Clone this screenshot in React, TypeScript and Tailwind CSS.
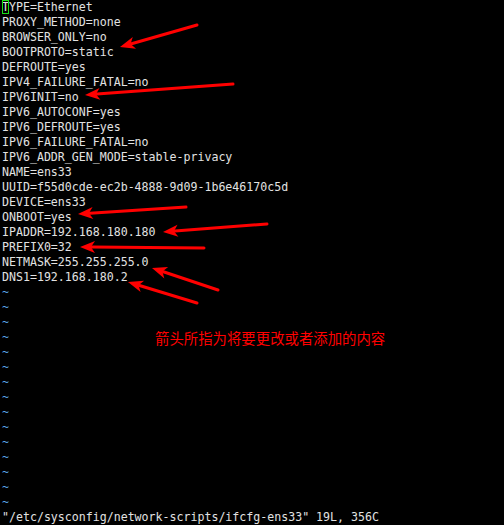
import React from 'react';

const lines = [
    'TYPE=Ethernet',
    'PROXY_METHOD=none',
    'BROWSER_ONLY=no',
    'BOOTPROTO=static',
    'DEFROUTE=yes',
    'IPV4_FAILURE_FATAL=no',
    'IPV6INIT=no',
    'IPV6_AUTOCONF=yes',
    'IPV6_DEFROUTE=yes',
    'IPV6_FAILURE_FATAL=no',
    'IPV6_ADDR_GEN_MODE=stable-privacy',
    'NAME=ens33',
    'UUID=f55d0cde-ec2b-4888-9d09-1b6e46170c5d',
    'DEVICE=ens33',
    'ONBOOT=yes',
    'IPADDR=192.168.180.180',
    'PREFIX0=32',
    'NETMASK=255.255.255.0',
    'DNS1=192.168.180.2',
];

// 화살표: [꼬리 x, 꼬리 y, 끝 x, 끝 y]
const arrows: [number, number, number, number][] = [
    [197, 25, 120, 47],
    [233, 84, 85, 95],
    [186, 207, 78, 214],
    [267, 224, 163, 232],
    [204, 248, 80, 247],
    [218, 290, 152, 268],
    [197, 303, 128, 282],
];

const Arrow: React.FC<{ a: [number, number, number, number] }> = ({ a }) => {
    const [x1, y1, x2, y2] = a;
    const dx = x2 - x1;
    const dy = y2 - y1;
    const len = Math.sqrt(dx * dx + dy * dy);
    const ux = dx / len;
    const uy = dy / len;
    const headLen = 15;
    const headW = 6;
    const bx = x2 - ux * headLen;
    const by = y2 - uy * headLen;
    const px = -uy * headW;
    const py = ux * headW;
    return (
        <g>
            <line x1={x1} y1={y1} x2={bx + ux * 3} y2={by + uy * 3} stroke="#ff0000" strokeWidth={3} strokeLinecap="round" />
            <polygon points={`${x2},${y2} ${bx + px},${by + py} ${bx + ux * 4},${by + uy * 4} ${bx - px},${by - py}`} fill="#ff0000" />
        </g>
    );
};

export default function App() {
    return (
        <div className="relative w-[504px] h-[525px] bg-black overflow-hidden font-['DejaVu_Sans_Mono','Liberation_Mono',monospace] text-[11.6px] leading-[15px] text-[#e2e2e2]">
            <div className="flex flex-col pl-[2px]">
                {lines.map((line, i) => (
                    <div key={i} className="h-[15px] whitespace-pre">
                        {i === 0 ? (
                            <>
                                <span className="outline outline-1 outline-[#19e019] -outline-offset-1">T</span>
                                {line.slice(1)}
                            </>
                        ) : (
                            line
                        )}
                    </div>
                ))}
                {Array.from({ length: 15 }).map((_, i) => (
                    <div key={`t${i}`} className="h-[15px] text-[#5aa6ec]">~</div>
                ))}
                <div className="h-[15px] whitespace-pre">"/etc/sysconfig/network-scripts/ifcfg-ens33" 19L, 356C</div>
            </div>

            {/* 주석 화살표 */}
            <svg className="absolute left-0 top-0" width={504} height={525}>
                {arrows.map((a, i) => (
                    <Arrow key={i} a={a} />
                ))}
            </svg>

            <div className="absolute left-[155px] top-[329px] text-[14.4px] leading-[18px] text-[#ff0000] font-['Noto_Sans_CJK_SC',sans-serif]">
                箭头所指为将要更改或者添加的内容
            </div>
        </div>
    );
}
